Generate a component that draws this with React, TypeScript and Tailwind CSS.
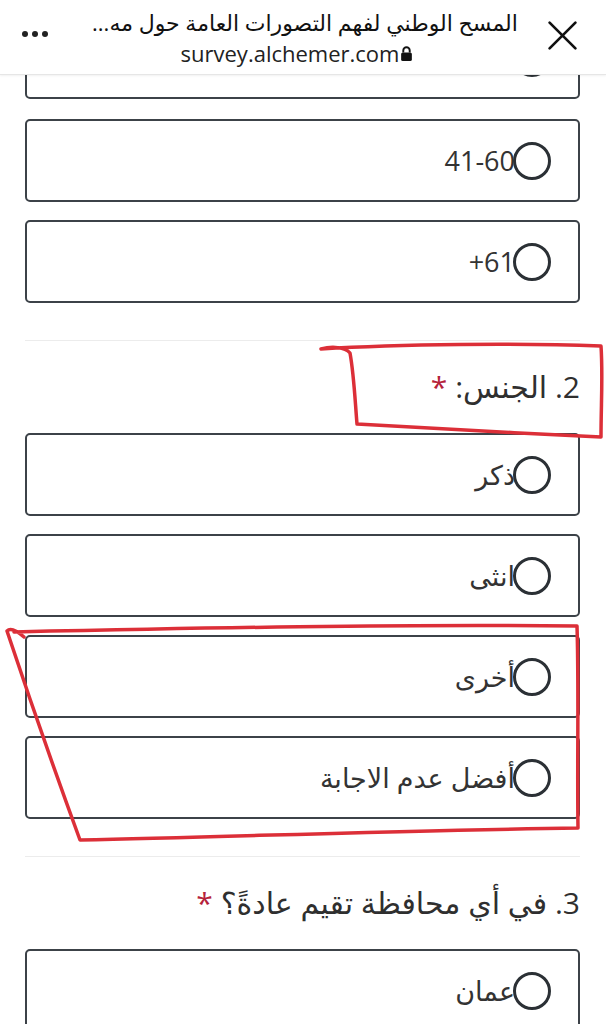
import React from 'react';

const font = "font-['Open_Sans','DejaVu_Sans',sans-serif]";

function Option({ label }: { label: string }) {
  return (
    <div className="h-[83px] rounded-[5px] border-[2.5px] border-[#3c4248] bg-white flex items-center pr-[27px]" dir="rtl">
      <span className="w-[38px] h-[38px] rounded-full border-[3px] border-[#2b3035] shrink-0" />
      <span className="text-[27px] leading-none text-[#333] -mr-[2px]">{label}</span>
    </div>
  );
}

function Question({ title }: { title: string }) {
  return (
    <div className="h-[93px] border-t border-[#ececec] flex items-center" dir="rtl">
      <p className="text-[30px] leading-none text-[#2f2f2f]">
        {title} <span className="text-[#b5223a]">*</span>
      </p>
    </div>
  );
}

export default function App() {
  return (
    <div className={`relative w-[606px] h-[1024px] overflow-hidden bg-white ${font}`}>
      {/* Browser header */}
      <div className="relative z-10 h-[75px] bg-white border-b border-[#e6e6e6] shadow-[0_1px_2px_rgba(0,0,0,0.06)] flex items-center">
        <div className="w-[70px] flex items-center justify-center gap-[4px] pb-[6px]">
          <span className="w-[6px] h-[6px] rounded-full bg-[#222]" />
          <span className="w-[6px] h-[6px] rounded-full bg-[#222]" />
          <span className="w-[6px] h-[6px] rounded-full bg-[#222]" />
        </div>
        <div className="flex-1 flex flex-col items-center">
          <p className="text-[22px] leading-[32px] text-[#111] pl-[16px]" dir="rtl">
            المسح الوطني لفهم التصورات العامة حول مه...
          </p>
          <p className="flex items-center text-[22px] leading-[30px] text-[#222]">
            survey.alchemer.com
            <svg width="13" height="15" viewBox="0 0 12 14" className="ml-[1px]">
              <path d="M3 6V4.2a3 3 0 0 1 6 0V6" fill="none" stroke="#111" strokeWidth="1.8" />
              <rect x="1" y="6" width="10" height="8" rx="1.5" fill="#111" />
            </svg>
          </p>
        </div>
        <div className="w-[82px] flex items-center justify-center pb-[3px] pr-[6px]">
          <svg width="31" height="31" viewBox="0 0 30 30">
            <path d="M2.5 2.5L27.5 27.5M27.5 2.5L2.5 27.5" stroke="#111" strokeWidth="2.6" strokeLinecap="round" />
          </svg>
        </div>
      </div>

      {/* Survey content */}
      <div className="pl-[25px] pr-[26px]">
        <div className="h-[24px] overflow-hidden flex flex-col justify-end">
          <div className="shrink-0">
            <Option label="" />
          </div>
        </div>
        <div className="flex flex-col gap-[18px] mt-[20px]">
          <Option label="41-60" />
          <Option label="61+" />
        </div>
        <div className="mt-[37px]">
          <Question title="2. الجنس:" />
        </div>
        <div className="flex flex-col gap-[18px]">
          <Option label="ذكر" />
          <Option label="انثى" />
          <Option label="أخرى" />
          <Option label="أفضل عدم الاجابة" />
        </div>
        <div className="mt-[37px]">
          <Question title="3. في أي محافظة تقيم عادةً؟" />
        </div>
        <div className="flex flex-col gap-[18px]">
          <Option label="عمان" />
        </div>
      </div>

      {/* Hand-drawn red marks */}
      <svg className="absolute inset-0 pointer-events-none z-20" width="606" height="1024" viewBox="0 0 606 1024">
        <g fill="none" stroke="#dc2f38" strokeWidth="3.5" strokeLinecap="round" strokeLinejoin="round">
          <path d="M321 349 C 400 344, 520 343, 601 346 C 603 375, 601 405, 601 437 C 520 433, 420 428, 357 424 C 355 400, 354 375, 350 353 C 345 347, 332 346, 321 349" />
          <path d="M24 637 C 16 630, 10 628, 7 631 C 30 700, 58 780, 80 840 C 250 836, 420 830, 578 828 C 577 760, 579 690, 577 626 C 400 624, 200 628, 14 632" />
        </g>
      </svg>
    </div>
  );
}
